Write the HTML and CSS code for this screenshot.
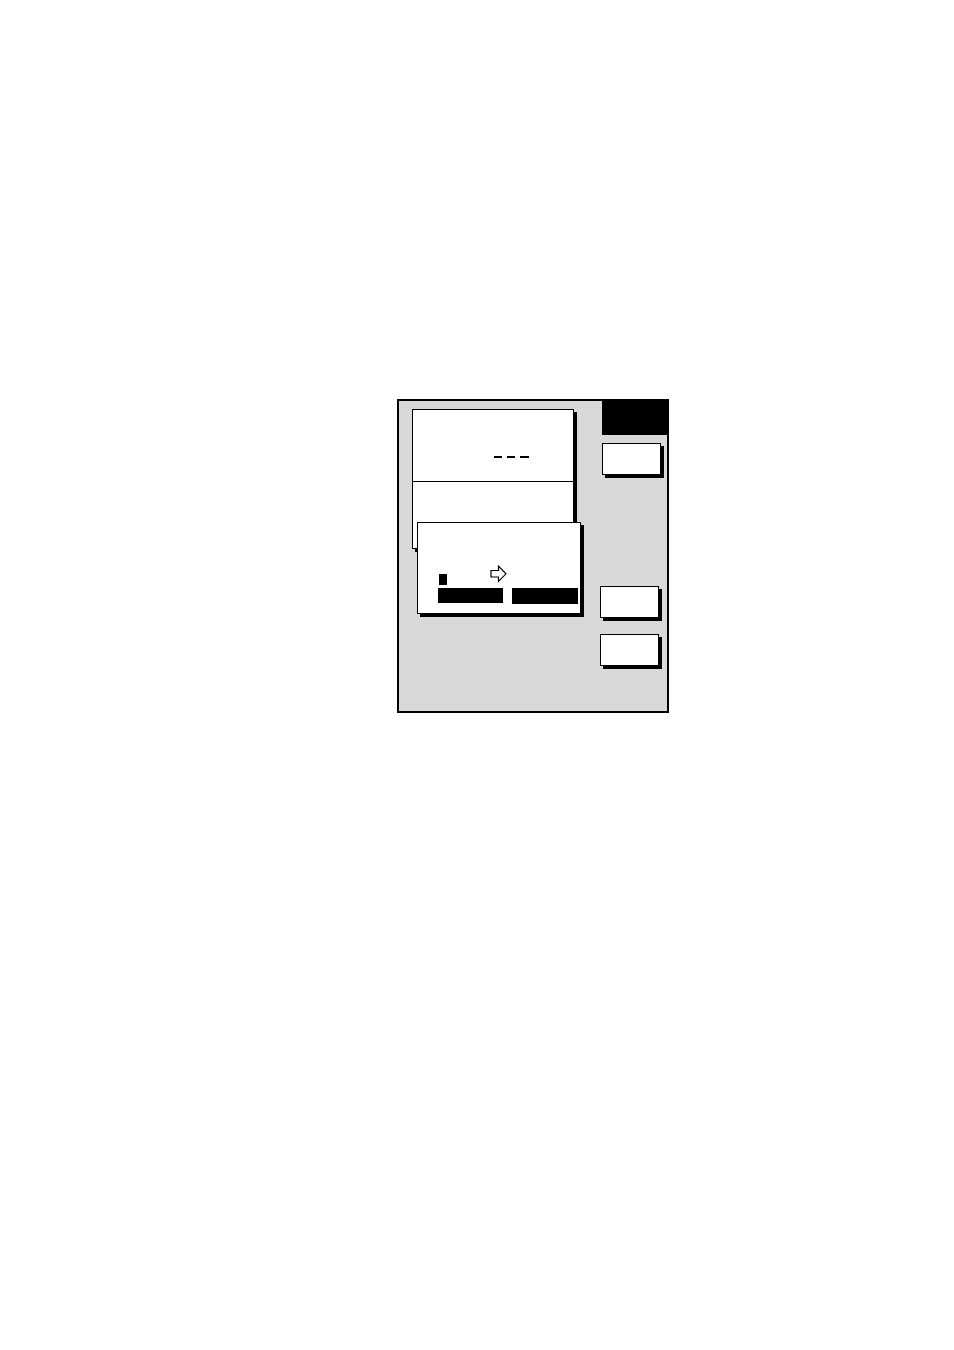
FILE: index.html
```html
<!DOCTYPE html>
<html>
<head>
<meta charset="utf-8">
<link rel="stylesheet" href="styles.css">
</head>
<body>
<div class="page">
  <div class="screen">
    <div class="window">
      <div class="win-top">
        <div class="dashes"><span class="dash"></span><span class="dash"></span><span class="dash dash-last"></span></div>
      </div>
      <div class="win-bottom"></div>
    </div>
    <div class="side">
      <div class="title-block"></div>
      <div class="key key-1"></div>
      <div class="key key-2"></div>
      <div class="key key-3"></div>
    </div>
    <div class="dialog">
      <div class="dlg-row">
        <span class="cursor"></span>
        <svg class="arrow" width="17" height="18" viewBox="0 0 17 18">
          <path d="M1 5.5 H8.5 V1.2 L16 8.8 L8.5 16.4 V12 H1 Z" fill="#fff" stroke="#000" stroke-width="1.2" stroke-linejoin="miter"/>
        </svg>
      </div>
      <div class="dlg-bars">
        <span class="bar bar-left"></span>
        <span class="bar bar-right"></span>
      </div>
    </div>
  </div>
</div>
</body>
</html>
```
FILE: styles.css
```css
html, body {
  margin: 0;
  padding: 0;
  background: #ffffff;
  font-family: "Liberation Sans", Arial, sans-serif;
}
.page {
  padding: 399px 0 0 397px;
}
.screen {
  position: relative;
  box-sizing: border-box;
  width: 272px;
  height: 314px;
  border: 2px solid #000;
  background: #d9d9d9;
  display: flex;
  align-items: flex-start;
}
.window {
  box-sizing: border-box;
  margin: 8px 0 0 13px;
  width: 162px;
  height: 140px;
  border: 1px solid #000;
  background: #fff;
  box-shadow: 3px 3px 0 #000;
  display: flex;
  flex-direction: column;
}
.win-top {
  height: 71px;
  border-bottom: 1px solid #000;
}
.dashes {
  display: flex;
  gap: 5px;
  padding: 46px 0 0 81px;
}
.dash {
  display: block;
  width: 8px;
  height: 2px;
  background: #000;
}
.dash-last {
  width: 9px;
}
.win-bottom {
  flex: 1;
}
.side {
  margin-left: auto;
  width: 67px;
  display: flex;
  flex-direction: column;
  align-items: flex-start;
}
.title-block {
  margin-left: 2px;
  width: 65px;
  height: 34px;
  background: #000;
}
.key {
  box-sizing: border-box;
  width: 59px;
  height: 32px;
  border: 1px solid #000;
  background: #fff;
  box-shadow: 3px 3px 0 #000;
}
.key-1 {
  margin: 8px 0 0 2px;
}
.key-2 {
  margin-top: 111px;
}
.key-3 {
  margin-top: 16px;
}
.dialog {
  position: absolute;
  left: 18px;
  top: 121px;
  box-sizing: border-box;
  width: 164px;
  height: 92px;
  border: 1px solid #000;
  background: #fff;
  box-shadow: 3px 3px 0 #000;
  padding: 42px 0 0 20px;
}
.dlg-row {
  display: flex;
  align-items: flex-start;
  height: 17px;
}
.cursor {
  display: block;
  width: 8px;
  height: 11px;
  margin: 9px 0 0 1px;
  background: #000;
}
.arrow {
  display: block;
  margin-left: 43px;
}
.dlg-bars {
  display: flex;
  align-items: flex-start;
  gap: 9px;
  margin-top: 6px;
}
.bar {
  display: block;
  background: #000;
}
.bar-left {
  width: 65px;
  height: 15px;
}
.bar-right {
  width: 66px;
  height: 16px;
}
```
